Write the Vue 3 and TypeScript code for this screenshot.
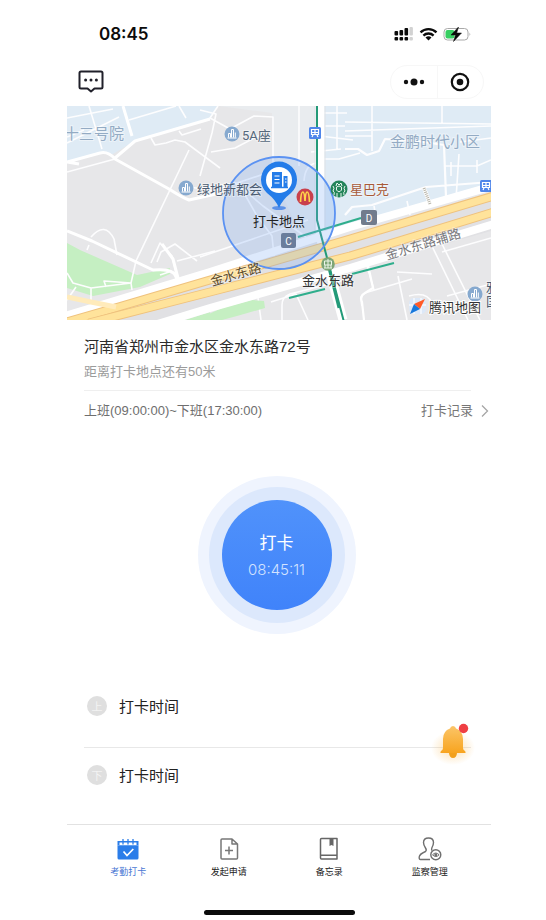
<script setup lang="ts">
import { ref } from 'vue'

type TabId = 'punch' | 'apply' | 'memo' | 'manage'

interface Tab {
  id: TabId
  label: string
}

interface PunchLog {
  badge: string
  label: string
}

const tabs: Tab[] = [
  { id: 'punch', label: '考勤打卡' },
  { id: 'apply', label: '发起申请' },
  { id: 'memo', label: '备忘录' },
  { id: 'manage', label: '监察管理' },
]
const activeTab = ref<TabId>('punch')

const address = '河南省郑州市金水区金水东路72号'
const distance = 50
const workStart = '09:00:00'
const workEnd = '17:30:00'
const now = ref('08:45:11')

const logs: PunchLog[] = [
  { badge: '上', label: '打卡时间' },
  { badge: '下', label: '打卡时间' },
]
</script>

<template>
  <div class="page">
    <div class="phone">
      <div class="status">
        <span class="clock">08:45</span>
        <svg class="status-icons" width="78" height="18" viewBox="0 0 78 18" aria-hidden="true">
          <g fill="#0b0b0b">
            <rect x=".5" y="6" width="3.600" height="4.500" rx="1" />
            <rect x="5.500" y="5" width="3.600" height="5.500" rx="1" />
            <rect x="10.500" y="3" width="3.600" height="7.500" rx="1" />
            <rect x=".5" y="12" width="3.600" height="3.500" rx="1" />
            <rect x="5.500" y="12" width="3.600" height="3.500" rx="1" />
            <rect x="10.500" y="12" width="3.600" height="3.500" rx="1" />
          </g>
          <g fill="#d2d2d2">
            <rect x="15.500" y="2" width="3.400" height="8.500" rx="1" />
            <rect x="15.500" y="12" width="3.400" height="3.500" rx="1" />
          </g>
          <g fill="none" stroke="#0b0b0b" stroke-width="2.300">
            <path d="M26.500 7.300a11.600 11.600 0 0 1 16 0" />
            <path d="M29.400 10.600a7.300 7.300 0 0 1 10.200 0" />
          </g>
          <path d="M31.500 12.600a4.400 4.400 0 0 1 6 0l-3 3z" fill="#0b0b0b" />
          <rect x="50" y="3.500" width="24" height="11.500" rx="3.500" fill="#fff" stroke="#a9a9a9" />
          <rect x="51.500" y="5" width="9" height="8.500" rx="2" fill="#38cf62" />
          <path d="M75.500 7.500q1.800 1.700 0 3.600z" fill="#a9a9a9" />
          <path d="M64.500 2l-7.500 8h4.500l-2 6.500 8-8.500h-4.800z" fill="#0b0b0b" stroke="#0b0b0b" stroke-width=".5" />
        </svg>
      </div>

      <header class="nav">
        <button class="icon-btn" type="button" aria-label="消息">
          <svg width="26" height="24" viewBox="0 0 26 24">
            <path d="M3 1.500h20q1.500 0 1.500 1.500v14q0 1.500-1.500 1.500h-6.500L13 21.500l-3.500-3H3Q1.500 18.500 1.500 17V3Q1.500 1.500 3 1.500z" fill="none" stroke="#20202a" stroke-width="2" stroke-linejoin="round" />
            <g fill="#20202a"><circle cx="7.600" cy="10" r="1.500" /><circle cx="13" cy="10" r="1.500" /><circle cx="18.400" cy="10" r="1.500" /></g>
          </svg>
        </button>
        <div class="capsule">
          <button type="button" aria-label="更多">
            <svg width="22" height="12" viewBox="0 0 22 12" fill="#111"><circle cx="3" cy="6" r="2.200" /><circle cx="11" cy="6" r="3.500" /><circle cx="19" cy="6" r="2.200" /></svg>
          </button>
          <button type="button" aria-label="关闭">
            <svg width="20" height="20" viewBox="0 0 20 20"><circle cx="10" cy="10" r="8.200" fill="none" stroke="#111" stroke-width="2.200" /><circle cx="10" cy="10" r="3.300" fill="#111" /></svg>
          </button>
        </div>
      </header>

      <svg class="map" viewBox="0 0 424 214" role="img" aria-label="打卡地点">
        <rect width="424" height="214" fill="#e7e7e9" />
        <path d="M0 0h151l-8 14-37 10-40 12-20 12-16-1-30 9z" fill="#dfebf5" />
        <path d="M152 0h97v124l-16 5-27-62-1-60z" fill="#e9ecef" />
        <path d="M256 0h168v80l-168 50z" fill="#dfebf5" />
        <path d="M0 137l13 7 57 25 33-7v6l-30 13-47 9-26-8z" fill="#c5efc2" />

        <!-- minor streets -->
        <g fill="none" stroke="#fdfdfe" stroke-width="1.600" stroke-linejoin="round">
          <path d="M22 0l13 43M0 12l46-9M0 37l52-26M0 31l17-7M62 14l47-14M0 66l48-13M112 0l7 12" />
          <path d="M84 32l4 7 11-2 9-3 10 2 35 26M112 25l3 4 19-6M122 44L69 155l-5 22 1 7" />
          <path d="M22 139l-2 5M24 131q14-16 23 2l3 16M84 157l9-20 12 13 5 20M90 156l4-10 14-8 22 17M110 155l38-10" />
          <path d="M0 167l6 10 18 5 40-5M24 182v12M64 177l-27-2 2 6M93 169l12-4M0 194l9-13" />
          <path d="M151 0l-8 12 20 11 24-13 19 1v54l-60 20-29-5" />
          <path d="M133 4l16 4-4 19-12 43M173 80l17 30 15 20 2 20M133 82l36-5 27 23 43 31M133 151l108-37M195 28l-27 14-24 4" />
          <path d="M232 0v60M244 46l30-3M250 7h30M270 0v43M258 20h20M255 53h17l21-6M237 75q1-16 12-18M253 30l33 4" />
          <path d="M278 30h27M278 25l146-5M305 0v45M375 0v18M278 16l146 2M392 48l-3 45M378 60h32l14-6M310 117l-3-17M340 95l3 14M410 54v13M384 56v14M393 36l31-4" />
          <path d="M278 43l13 0 9 6 12-4 6-12 32 2 27 4 2 52M278 109l7-8 20-2 54-18 65-5" stroke-width="2.200" />
          <path d="M189 177l5 37M215 214v-15q0-8 8-11l55-14M204 196l25-8 12 26M300 160l7 24M295 200q-3-12 6-14l44-13M331 170l9 44M363 136l38 78M375 138l38 76M342 190q18-5 23 7M375 146l49-14M365 168l-35-2M380 190l44-12" />
        </g>
        <!-- secondary streets -->
        <g fill="none" stroke="#fff" stroke-width="3" stroke-linejoin="round">
          <path d="M56 0l9 30M0 56l33-9q8-2 15 6l54 30q14 9 20 11l27-6M48 52l20-17 75-22M0 125l25 10 61 29q21-2 23 7l5 13M95 138l11 15 6 23M0 56l12 2" />
          <path d="M301 159l5 23-8 5q-6 3-3 9l2 18" stroke-width="2.200" />
        </g>
        <!-- rail corridor -->
        <path d="M253 0v130l23 84" fill="none" stroke="#fff" stroke-width="9" />
        <path d="M248 0v135M258 0v128" fill="none" stroke="#dfe2e6" stroke-width="1" />

        <!-- expressway -->
        <path d="M0 218L424 93v32L80 222z" fill="#e1e1e4" />
        <path d="M133 212l22-10 30-8 12 1 1 7-28 8-15 4h-22z" fill="#c5efc2" />
        <path d="M118 214l25-8v8z" fill="#c5efc2" />
        <g fill="none">
          <path d="M-2 210L143 166 283 121 430 79" stroke="#fff" stroke-width="8" />
          <path d="M84 220L143 202 283 162 430 117" stroke="#fff" stroke-width="8" />
          <path d="M0 216L48 202 143 174 283 133 430 89" stroke="#efc27e" stroke-width="9" />
          <path d="M0 216L48 202 143 174 283 133 430 89" stroke="#ffe39b" stroke-width="7" />
          <path d="M22 217L143 186 283 150 430 105" stroke="#efc27e" stroke-width="9" />
          <path d="M22 217L143 186 283 150 430 105" stroke="#ffe39b" stroke-width="7" />
          <path d="M0 191l24 5 25 5" stroke="#ffebbb" stroke-width="5" />
          <path d="M357 82l6 16" stroke="#fff" stroke-width="4" />
          <path d="M357 82l6 16" stroke="#b7b4a8" stroke-width="3" stroke-dasharray="1 1" />
        </g>
        <g fill="none" stroke="#2fae8c" stroke-width="2">
          <path d="M250 0v114l27 102" stroke="#239a78" />
          <path d="M262 162l10 40" stroke="#239a78" stroke-width="3" />
          <path d="M231 131l63-19M222 192l36-9M285 168l42-11" />
        </g>

        <circle cx="212" cy="107" r="56" fill="#77a6f5" fill-opacity=".25" stroke="#5b92f2" stroke-width="1.800" />

        <!-- building markers -->
        <g v-for="[x, y] in [[165, 28], [119, 82], [408, 188]]" :key="x" :transform="`translate(${x} ${y})`">
          <circle r="7.500" fill="#86a9cf" />
          <path d="M-4.500 4h9M-3.500 3.500v-4h2v4M-.500 3.500v-8h2v8M3.300 3.500v-5" stroke="#fff" stroke-width="1" fill="none" />
        </g>
        <g v-for="[x, y] in [[248, 27], [419, 80]]" :key="x" :transform="`translate(${x} ${y})`">
          <rect x="-6" y="-6" width="12" height="12" rx="1.500" fill="#4f86ea" />
          <path d="M-3.500-3.500h7v5h-7zM0-3v4M-3 4l1-2M3 4L2 2M-3.500-.500h7" fill="none" stroke="#fff" stroke-width="1.200" />
        </g>
        <g>
          <circle cx="238" cy="91" r="8.500" fill="#c9404c" />
          <path d="M233.500 96q.5-10 2.300-10 1.700 0 2.200 9 .5-9 2.200-9 1.800 0 2.300 10" fill="none" stroke="#ffd34a" stroke-width="1.700" />
        </g>
        <g transform="translate(272 83)">
          <circle r="8.500" fill="#23845a" />
          <path d="M-3-3L-2-6 0-4 2-6 3-3M-2.500-2q2.500-2 5 0v3Q0 4.500-2.500 1zM-6-3q2 2 0 5 2 1 1 4M6-3q-2 2 0 5-2 1-1 4M-2 4v4M2 4v4" fill="none" stroke="#eaf6ef" stroke-width="1" />
        </g>
        <g transform="translate(261 158)">
          <circle r="6.800" fill="#7da577" />
          <path d="M-3.500-3h7v4h-7zM0-5v9M-4 4h8M-3 1v3M3 1v3" fill="none" stroke="#eef6e9" stroke-width="1" />
        </g>
        <rect x="214" y="127" width="15" height="15" rx="2" fill="#6a7d9c" />
        <text class="exit" x="221.500" y="138.500">C</text>
        <rect x="294" y="104" width="16" height="15" rx="2" fill="#717b8c" />
        <text class="exit" x="302" y="115.500">D</text>

        <g class="labels">
          <text class="area" x="-3" y="33">十三号院</text>
          <text class="area" x="323" y="41">金鹏时代小区</text>
          <text x="175" y="34" fill="#55687c">5A座</text>
          <text x="130" y="88" fill="#4b5c72">绿地新都会</text>
          <text x="283" y="88" fill="#a85a38">星巴克</text>
          <text x="235" y="179" fill="#333">金水东路</text>
          <text transform="translate(145 180) rotate(-16)" fill="#5c4b2c">金水东路</text>
          <text transform="translate(320 154) rotate(-17)" fill="#77777b">金水东路辅路</text>
          <text x="419" y="186" fill="#4b5c72">雅</text>
          <text x="419" y="200" fill="#4b5c72">国</text>
        </g>

        <!-- location pin -->
        <ellipse cx="212" cy="102" rx="7" ry="2" fill="#5d92e8" />
        <path d="M212 102q-3-8-12-15a18 18 0 1 1 24 0q-9 7-12 15z" fill="#247ce9" />
        <circle cx="212" cy="74" r="13" fill="#fff" />
        <path d="M205 66h10v15h-10zM216.500 70h4v11h-4z" fill="#247ce9" />
        <path d="M207.500 70h5M207.500 73.500h5M207.500 77h5M218 73h1.500M218 76h1.500" stroke="#fff" stroke-width="1" />
        <path d="M204 81.500h17" stroke="#247ce9" stroke-width="1.500" />
        <text class="pin-label" x="212" y="120">打卡地点</text>

        <!-- map provider mark -->
        <rect x="342" y="192" width="17" height="16" rx="5" fill="#dce8f8" />
        <path d="M347 192v16M354 192v16M342 199h17" stroke="#f6f9fd" stroke-width="1.500" />
        <path d="M358 193l-5 10-6-5z" fill="#ff5a28" />
        <path d="M343 208l4-10 6 5z" fill="#1778dc" />
        <text class="provider" x="362" y="206">腾讯地图</text>
      </svg>

      <main class="body">
        <section class="place">
          <h1>{{ address }}</h1>
          <p>距离打卡地点还有{{ distance }}米</p>
        </section>

        <div class="shift">
          <span>上班({{ workStart }})~下班({{ workEnd }})</span>
          <a class="record" href="#records">
            打卡记录
            <svg width="8" height="14" viewBox="0 0 8 14"><path d="M1 1.500L6.500 7 1 12.500" fill="none" stroke="#a6a6a6" stroke-width="1.300" /></svg>
          </a>
        </div>

        <section class="punch-area">
          <div class="ring outer">
            <div class="ring inner">
              <button class="punch" type="button">
                <span class="punch-title">打卡</span>
                <span class="punch-time">{{ now }}</span>
              </button>
            </div>
          </div>
        </section>

        <section class="logs">
          <div v-for="log in logs" :key="log.badge" class="log">
            <span class="badge">{{ log.badge }}</span>
            <span>{{ log.label }}</span>
          </div>
          <button class="bell" type="button" aria-label="提醒">
            <svg width="50" height="50" viewBox="0 0 50 50">
              <defs>
                <linearGradient id="bellFill" x1="0" y1="0" x2="0" y2="1">
                  <stop offset="0" stop-color="#fbc568" />
                  <stop offset="1" stop-color="#f8a41f" />
                </linearGradient>
                <radialGradient id="bellGlow">
                  <stop offset="0" stop-color="#f9ae35" stop-opacity=".4" />
                  <stop offset="1" stop-color="#f9ae35" stop-opacity="0" />
                </radialGradient>
              </defs>
              <ellipse cx="25" cy="32" rx="22" ry="17" fill="url(#bellGlow)" />
              <path d="M21 37h8q-.5 5-4 5t-4-5z" fill="#f2a01c" />
              <path d="M25 10q2.500 0 3 2.500 7 2.500 7 10.500v9q0 2 2 3 1.500 2-.500 2h-23q-2 0-.500-2 2-1 2-3v-9q0-8 7-10.500.500-2.500 3-2.500z" fill="url(#bellFill)" />
              <circle cx="35.500" cy="12.500" r="4.700" fill="#ef3f43" />
            </svg>
          </button>
        </section>
      </main>

      <nav class="tabs">
        <button
          v-for="tab in tabs"
          :key="tab.id"
          class="tab"
          :class="{ active: tab.id === activeTab }"
          type="button"
          @click="activeTab = tab.id"
        >
          <svg v-if="tab.id === 'punch'" width="24" height="24" viewBox="0 0 24 24">
            <path d="M1.500 4h21v4.500h-21z" fill="#2b7de9" />
            <path d="M3.500 5.500h17v2.500h-17z" fill="#fff" />
            <path d="M1.500 8.500h21V21q0 1.500-1.500 1.500H3Q1.500 22.500 1.500 21z" fill="#2b7de9" />
            <path d="M7 2v5.500M12 2v5.500M17 2v5.500" stroke="#2b7de9" stroke-width="1.300" />
            <path d="M7.500 14.500l3.500 4 6.300-6.500" fill="none" stroke="#fff" stroke-width="1.700" />
          </svg>
          <svg v-else-if="tab.id === 'apply'" width="24" height="24" viewBox="0 0 24 24" fill="none" stroke="#777" stroke-width="1.500" stroke-linejoin="round">
            <path d="M5 2h10l5.500 5v14q0 1-1 1H5q-1 0-1-1V3q0-1 1-1zM15 2v5h5.500M12 9.500v8M8 13.500h8" />
          </svg>
          <svg v-else-if="tab.id === 'memo'" width="24" height="24" viewBox="0 0 24 24" fill="none" stroke="#666" stroke-width="1.500" stroke-linejoin="round">
            <path d="M4.500 1.500h15.500v20.500H4.500q-1 0-1-1V2.500q0-1 1-1zM3.500 18.300H20" />
            <path d="M12.500 2v7l2-1 2 1V2z" fill="#666" stroke="none" />
          </svg>
          <svg v-else width="24" height="24" viewBox="0 0 24 24" fill="none" stroke="#6f6f6f" stroke-width="1.400" stroke-linejoin="round">
            <path d="M12 22.500H2.500Q1 22.500 1.200 20q.3-3 6.300-5.500 1.500-1.200 0-3.500Q5.500 8 5.500 5.500q0-4.500 5-4.500t5 4.500q0 2.500-1.700 5.500-.5 1.500.2 2.500" />
            <circle cx="17.800" cy="17.800" r="5" />
            <path d="M14.500 17.800q3.300-3.500 6.600 0-3.300 3.500-6.600 0z" stroke-width="1" />
            <circle cx="17.800" cy="17.800" r=".8" />
          </svg>
          <span>{{ tab.label }}</span>
        </button>
      </nav>
      <div class="home-indicator"></div>
    </div>
  </div>
</template>

<style>
body {
  margin: 0;
  background: #fff;
}
</style>

<style scoped>
.page {
  box-sizing: border-box;
  min-height: 100vh;
  padding: 0 55px 0 67px;
  font-family: "Liberation Sans", "Noto Sans CJK SC", sans-serif;
  color: #333;
}
.phone {
  display: flex;
  flex-direction: column;
  min-height: 100vh;
}
button {
  margin: 0;
  padding: 0;
  border: 0;
  background: none;
  font: inherit;
  color: inherit;
  cursor: pointer;
}
svg {
  display: block;
}
.status {
  display: flex;
  align-items: center;
  justify-content: space-between;
  padding: 24px 19px 0 32px;
  height: 20px;
}
.clock {
  font: 600 17px/20px Inter, sans-serif;
  color: #0b0b0b;
}
.nav {
  display: flex;
  align-items: center;
  justify-content: space-between;
  margin-top: 13px;
  padding: 0 7px 0 11px;
  height: 49px;
}
.capsule {
  display: flex;
  border: 1px solid #f7f7f7;
  border-radius: 18px;
}
.capsule button {
  display: flex;
  align-items: center;
  justify-content: center;
  width: 46px;
  height: 32px;
}
.capsule button + button {
  box-shadow: inset 1px 0 #f7f7f7;
}
.map {
  width: 100%;
  height: auto;
  font-family: Roboto, "Noto Sans CJK SC", sans-serif;
}
.labels {
  font-size: 13px;
  paint-order: stroke;
  stroke: #fff;
  stroke-opacity: 0.4;
  stroke-width: 2px;
}
.area {
  font-size: 15px;
  fill: #93abc4;
}
.exit {
  font-size: 10px;
  fill: #fff;
  text-anchor: middle;
}
.pin-label {
  font-size: 13px;
  fill: #222;
  text-anchor: middle;
}
.provider {
  font-size: 13px;
  fill: #333;
  paint-order: stroke;
  stroke: #fff;
  stroke-width: 2px;
}
.body {
  flex: 1;
  padding: 0 20px 0 17px;
}
.place {
  padding: 15px 0 8px;
  border-bottom: 1px solid #efefef;
}
.place h1 {
  margin: 0;
  font-size: 15px;
  font-weight: 400;
  line-height: 24px;
  color: #2b2b2b;
}
.place p {
  margin: 3px 0 0;
  font-size: 13px;
  line-height: 20px;
  color: #9b9b9b;
}
.shift {
  display: flex;
  align-items: center;
  justify-content: space-between;
  margin-right: -18px;
  height: 39px;
  font-size: 13px;
  line-height: 20px;
  color: #6e6e6e;
}
.record {
  display: flex;
  align-items: center;
  gap: 8px;
  color: #777;
  text-decoration: none;
}
.punch-area {
  display: flex;
  justify-content: center;
  padding: 46px 2px 36px 0;
}
.ring {
  display: flex;
  border-radius: 50%;
}
.outer {
  padding: 11px;
  background: #eff4fe;
}
.inner {
  padding: 13px;
  background: #dce8fc;
}
.punch {
  display: flex;
  flex-direction: column;
  align-items: center;
  justify-content: center;
  gap: 6px;
  width: 110px;
  height: 110px;
  border-radius: 50%;
  background: linear-gradient(#5092fb, #4083fa);
  color: #fff;
}
.punch-title {
  font-family: "Noto Sans CJK SC", sans-serif;
  font-size: 17px;
  line-height: 24px;
}
.punch-time {
  font: 300 15px/20px Inter, sans-serif;
  color: #d3e3ff;
}
.logs {
  position: relative;
}
.log {
  display: flex;
  align-items: center;
  gap: 12px;
  padding-left: 3px;
  height: 54px;
  font-family: "Noto Sans CJK SC", sans-serif;
  font-size: 15px;
  line-height: 20px;
  color: #222;
}
.log:first-child {
  height: 71px;
  padding-bottom: 6px;
  border-bottom: 1px solid #e8e8e8;
}
.badge {
  width: 20px;
  border-radius: 50%;
  background: #dfdfdf;
  color: #f3f3f3;
  font-size: 11px;
  text-align: center;
}
.bell {
  position: absolute;
  top: 46px;
  right: -7px;
}
.tabs {
  display: grid;
  grid-template-columns: repeat(4, 1fr);
  padding: 12px 11px 0;
  border-top: 1px solid #e2e2e2;
}
.tab {
  display: flex;
  flex-direction: column;
  align-items: center;
  gap: 4px;
  font-size: 9px;
  line-height: 14px;
  color: #222;
}
.tab.active {
  color: #4a78d4;
}
.home-indicator {
  width: 151px;
  height: 5px;
  margin: 31px auto 5px;
  border-radius: 3px;
  background: #0b0b0b;
}
</style>
